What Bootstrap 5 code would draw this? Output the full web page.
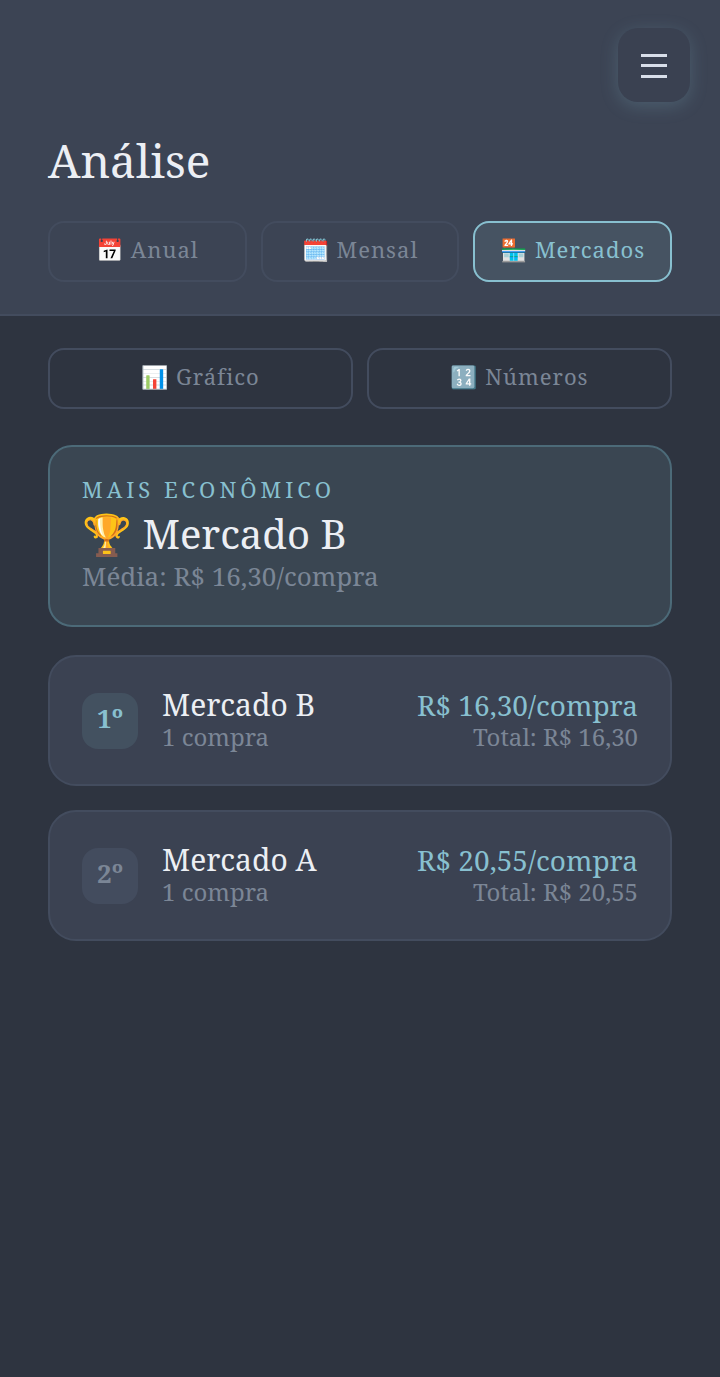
<!DOCTYPE html>
<html lang="pt-BR">
<head>
    <meta charset="UTF-8">
    <meta name="viewport" content="width=device-width, initial-scale=1.0">
    <title>Análise</title>
    <link rel="stylesheet" href="https://cdn.jsdelivr.net/npm/bootstrap@5.3.0/dist/css/bootstrap.min.css">
    <style>
        body {
            background-color: #2e3440;
            color: #eceff4;
            font-family: "Noto Serif", "DejaVu Serif", serif;
            min-height: 1377px;
        }

        .top-head {
            background-color: #3c4454;
            border-bottom: 2px solid #434c5e;
            height: 316px;
            padding: 28px 48px 0;
        }

        .menu-btn {
            width: 72px;
            height: 74px;
            margin-right: -18px;
            padding: 2px 0 0;
            background-color: #3a4151;
            border: 0;
            border-radius: 20px;
            box-shadow: 0 4px 18px rgba(136, 192, 208, 0.22);
        }

        .menu-btn svg { display: block; fill: #d8dee9; }

        .page-title {
            font-size: 46px;
            font-weight: 400;
            line-height: 62px;
            margin: 27px 0 30px;
        }

        .tab-btn {
            flex: 1 1 0;
            height: 61px;
            padding: 0 0 4px;
            background-color: transparent;
            border: 2px solid #434c5e;
            border-radius: 16px;
            color: #7b8696;
            font-size: 22px;
            letter-spacing: 1px;
        }

        .tab-btn.is-on {
            background-color: #465362;
            border-color: #88c0d0;
            color: #88c0d0;
        }

        .tab-gap { gap: 14px; }

        .page-body { padding: 32px 48px 0; }

        .best-box {
            height: 182px;
            margin: 36px 0 28px;
            padding: 27px 32px 0;
            background-color: #3a4652;
            border: 2px solid #4c6a78;
            border-radius: 24px;
        }

        .best-label {
            color: #88c0d0;
            font-size: 22px;
            letter-spacing: 4px;
            line-height: 30px;
            margin-bottom: 3px;
        }

        .best-name {
            font-size: 40px;
            line-height: 54px;
        }

        .best-avg {
            color: #7b8696;
            font-size: 26px;
            line-height: 30px;
        }

        .rank-row {
            height: 131px;
            margin-bottom: 24px;
            padding: 0 32px;
            background-color: #3b4252;
            border: 2px solid #434c5e;
            border-radius: 28px;
        }

        .rank-num {
            width: 56px;
            height: 56px;
            margin-right: 24px;
            padding-bottom: 4px;
            background-color: #434c5e;
            border-radius: 16px;
            color: #7b8696;
            font-size: 26px;
            font-weight: 700;
        }

        .rank-row.is-first .rank-num {
            background-color: #435160;
            color: #88c0d0;
        }

        .rank-name { font-size: 30px; line-height: 32px; }
        .rank-sub { color: #7b8696; font-size: 24px; line-height: 32px; }
        .rank-price { color: #88c0d0; font-size: 28px; line-height: 32px; }
    </style>
</head>
<body>

    <header class="top-head">
        <div class="d-flex justify-content-end">
            <button type="button" class="menu-btn d-flex align-items-center justify-content-center" aria-label="Menu">
                <svg width="26" height="24" viewBox="0 0 26 24">
                    <rect y="0" width="26" height="3"/>
                    <rect y="10" width="26" height="3"/>
                    <rect y="21" width="26" height="3"/>
                </svg>
            </button>
        </div>
        <h1 class="page-title">Análise</h1>
        <div class="d-flex tab-gap">
            <button type="button" class="tab-btn">📅 Anual</button>
            <button type="button" class="tab-btn">🗓️ Mensal</button>
            <button type="button" class="tab-btn is-on">🏪 Mercados</button>
        </div>
    </header>

    <main class="page-body">
        <div class="d-flex tab-gap">
            <button type="button" class="tab-btn">📊 Gráfico</button>
            <button type="button" class="tab-btn">🔢 Números</button>
        </div>

        <section class="best-box">
            <div class="best-label">MAIS ECONÔMICO</div>
            <div class="best-name">🏆 Mercado B</div>
            <div class="best-avg">Média: R$ 16,30/compra</div>
        </section>

        <div class="rank-row is-first d-flex align-items-center">
            <div class="rank-num d-flex align-items-center justify-content-center">1º</div>
            <div class="flex-grow-1">
                <div class="rank-name">Mercado B</div>
                <div class="rank-sub">1 compra</div>
            </div>
            <div class="text-end">
                <div class="rank-price">R$ 16,30/compra</div>
                <div class="rank-sub">Total: R$ 16,30</div>
            </div>
        </div>

        <div class="rank-row d-flex align-items-center">
            <div class="rank-num d-flex align-items-center justify-content-center">2º</div>
            <div class="flex-grow-1">
                <div class="rank-name">Mercado A</div>
                <div class="rank-sub">1 compra</div>
            </div>
            <div class="text-end">
                <div class="rank-price">R$ 20,55/compra</div>
                <div class="rank-sub">Total: R$ 20,55</div>
            </div>
        </div>
    </main>

    <script src="https://cdn.jsdelivr.net/npm/bootstrap@5.3.0/dist/js/bootstrap.bundle.min.js"></script>
</body>
</html>
